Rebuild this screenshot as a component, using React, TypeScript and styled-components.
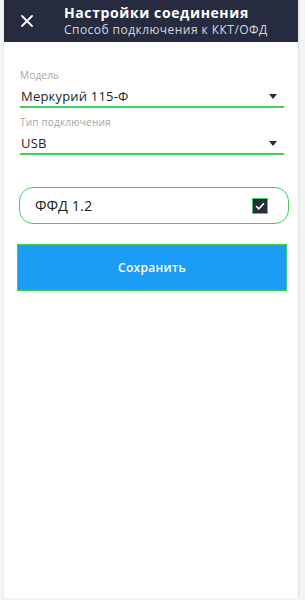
import React, { useState } from "react";
import styled, { createGlobalStyle } from "styled-components";

const GlobalStyle = createGlobalStyle`
    html, body {
        margin: 0;
        padding: 0;
        background: #f4f4f4;
        font-family: "Open Sans", "Noto Sans", sans-serif;
    }
`;

const Page = styled.div`
    width: 294px;
    height: 598px;
    margin-left: 4px;
    background: #ffffff;
    border-right: 1px solid #e2e2e2;
    box-shadow: 0 1px 2px rgba(0, 0, 0, 0.08);
    display: flex;
    flex-direction: column;
`;

const Header = styled.div`
    height: 42px;
    flex-shrink: 0;
    background: #262b3f;
    display: flex;
    align-items: center;
    padding-left: 16px;
    box-sizing: border-box;
`;

const CloseButton = styled.button`
    width: 14px;
    height: 14px;
    padding: 0;
    border: none;
    background: transparent;
    display: flex;
    align-items: center;
    justify-content: center;
    margin-right: 30px;
    cursor: pointer;
`;

const Titles = styled.div`
    display: flex;
    flex-direction: column;
    gap: 0;
`;

const Title = styled.div`
    color: #ffffff;
    font-size: 14px;
    font-weight: 700;
    line-height: 18px;
    letter-spacing: 0.6px;
`;

const Subtitle = styled.div`
    color: #d6d8de;
    font-size: 12px;
    font-weight: 500;
    line-height: 16px;
    letter-spacing: 0.45px;
`;

const Content = styled.div`
    padding: 27px 10px 0 16px;
    display: flex;
    flex-direction: column;
`;

const Field = styled.div`
    display: flex;
    flex-direction: column;
    margin-bottom: 8px;
`;

const Label = styled.div`
    color: #a4a4a4;
    font-size: 10px;
    line-height: 12px;
    letter-spacing: 0.2px;
    margin-bottom: 5px;
`;

const SelectRow = styled.div`
    display: flex;
    align-items: center;
    justify-content: space-between;
    height: 20px;
    width: 256px;
    padding: 0 7px 0 1px;
    border-bottom: 2px solid #3fcf5e;
    color: #1f1f1f;
    font-size: 13px;
    letter-spacing: 0.2px;
`;

const Arrow = styled.span`
    width: 0;
    height: 0;
    border-left: 4.5px solid transparent;
    border-right: 4.5px solid transparent;
    border-top: 5px solid #262b3f;
`;

const CheckCard = styled.label`
    margin-top: 24px;
    margin-left: -1px;
    width: 270px;
    height: 37px;
    box-sizing: border-box;
    border: 1.5px solid #3fcf5e;
    border-radius: 14px;
    display: flex;
    align-items: center;
    justify-content: space-between;
    padding: 0 20px 0 15px;
    font-size: 14.5px;
    color: #1c1c1c;
    cursor: pointer;
`;

const Box = styled.span<{ $checked: boolean }>`
    width: 16px;
    height: 16px;
    box-sizing: border-box;
    background: ${(p) => (p.$checked ? "#262b3f" : "#ffffff")};
    border: 1.5px solid #3fcf5e;
    display: flex;
    align-items: center;
    justify-content: center;
`;

const SaveButton = styled.button`
    margin-top: 20px;
    margin-left: -3px;
    width: 270px;
    height: 47px;
    background: #1b9cf5;
    border: 1px solid #3fcf5e;
    color: #ffffff;
    font-family: inherit;
    font-size: 12px;
    font-weight: 600;
    letter-spacing: 0.3px;
    cursor: pointer;
`;

function App() {
    let [checked, setChecked] = useState(true);

    return (
        <>
            <GlobalStyle />
            <Page>
                <Header>
                    <CloseButton>
                        <svg width="12" height="12" viewBox="0 0 12 12">
                            <path
                                d="M1 1 L11 11 M11 1 L1 11"
                                stroke="#ffffff"
                                strokeWidth="1.8"
                                strokeLinecap="round"
                            />
                        </svg>
                    </CloseButton>
                    <Titles>
                        <Title>Настройки соединения</Title>
                        <Subtitle>Способ подключения к ККТ/ОФД</Subtitle>
                    </Titles>
                </Header>
                <Content>
                    <Field>
                        <Label>Модель</Label>
                        <SelectRow>
                            Меркурий 115-Ф
                            <Arrow />
                        </SelectRow>
                    </Field>
                    <Field>
                        <Label>Тип подключения</Label>
                        <SelectRow>
                            USB
                            <Arrow />
                        </SelectRow>
                    </Field>
                    <CheckCard onClick={() => setChecked(!checked)}>
                        ФФД 1.2
                        <Box $checked={checked}>
                            {checked && (
                                <svg width="10" height="8" viewBox="0 0 10 8">
                                    <path
                                        d="M1 4 L3.8 6.8 L9 1.2"
                                        stroke="#ffffff"
                                        strokeWidth="1.6"
                                        fill="none"
                                    />
                                </svg>
                            )}
                        </Box>
                    </CheckCard>
                    <SaveButton>Сохранить</SaveButton>
                </Content>
            </Page>
        </>
    );
}

export default App;
